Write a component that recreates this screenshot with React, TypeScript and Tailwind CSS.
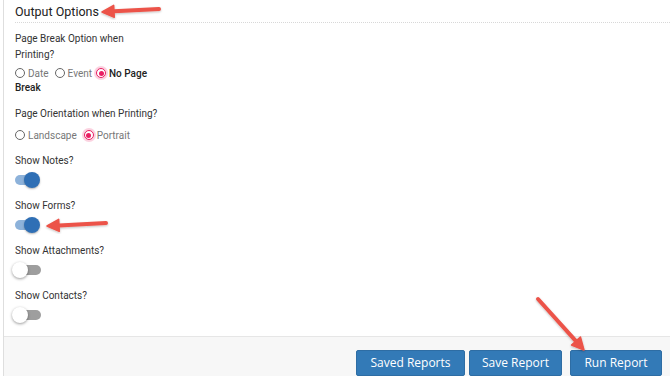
import React from 'react'

function Circle({ checked }: { checked?: boolean }) {
  return (
    <span
      className={
        checked
          ? 'inline-block align-[-1px] w-[10px] h-[10px] rounded-full border-[1px] border-[#e91e63] bg-white shadow-[0_0_0_2px_rgba(233,30,99,0.2)] relative mr-[3px]'
          : 'inline-block align-[-1px] w-[10px] h-[10px] rounded-full border-[1px] border-[#666] bg-white mr-[3px]'
      }
    >
      {checked && <span className="absolute left-[1.5px] top-[1.5px] w-[5px] h-[5px] rounded-full bg-[#e91e63]" />}
    </span>
  )
}

function Radio({ label, checked, gap = 0 }: { label: string; checked?: boolean; gap?: number }) {
  return (
    <>
      <Circle checked={checked} />
      <span className="text-[#777]" style={{ marginRight: gap }}>
        {label}
      </span>
    </>
  )
}

function Toggle({ on }: { on?: boolean }) {
  return (
    <div className="relative h-[20px] w-[30px] mt-[1px]">
      <div
        className={
          on
            ? 'absolute left-[0px] top-[5px] w-[24px] h-[10px] rounded-full bg-[#8db2da]'
            : 'absolute left-[2px] top-[5px] w-[24px] h-[10px] rounded-full bg-[#9e9e9e]'
        }
      />
      <div
        className={
          on
            ? 'absolute left-[9px] top-[2px] w-[16px] h-[16px] rounded-full bg-[#2f6fb5] shadow-[0_1px_2px_rgba(0,0,0,0.3)]'
            : 'absolute left-[-3px] top-[2px] w-[16px] h-[16px] rounded-full bg-white shadow-[0_1px_3px_rgba(0,0,0,0.4)]'
        }
      />
    </div>
  )
}

function ToggleField({ label, on }: { label: string; on?: boolean }) {
  return (
    <div className="h-[45px] pt-[1px]">
      <div className="leading-[16px]">{label}</div>
      <Toggle on={on} />
    </div>
  )
}

function Arrow({ x1, y1, x2, y2 }: { x1: number; y1: number; x2: number; y2: number }) {
  const ang = Math.atan2(y2 - y1, x2 - x1)
  const len = 12
  const w = 6
  const bx = x2 - Math.cos(ang) * len
  const by = y2 - Math.sin(ang) * len
  const px = -Math.sin(ang) * w
  const py = Math.cos(ang) * w
  return (
    <g filter="url(#sh)">
      <line x1={x1} y1={y1} x2={bx} y2={by} stroke="#ec5348" strokeWidth={4} strokeLinecap="round" />
      <polygon points={`${x2},${y2} ${bx + px},${by + py} ${bx - px},${by - py}`} fill="#ec5348" strokeLinejoin="round" stroke="#ec5348" strokeWidth={1.5} />
    </g>
  )
}

export default function App() {
  return (
    <div className="relative w-[670px] h-[376px] overflow-hidden bg-white font-['Roboto',sans-serif] text-[10px] text-[#333]">
      <div className="ml-[3px] h-full border-l border-[#dedede] flex flex-col">
        <div className="flex-1 pl-[11px]">
          <div className="pt-[3px] pb-[1px] border-b border-dotted border-[#d8d8d8] text-[12.5px] leading-[18px] text-[#222]">
            Output Options
          </div>
          <div className="w-[150px] mt-[8px] leading-[16px]">Page Break Option when Printing?</div>
          <div className="w-[150px] mt-[4px] leading-[14px]">
            <Radio label="Date" gap={6} />
            <Radio label="Event" gap={4} />
            <Circle checked />
            <span className="text-[#222] font-medium">No Page</span>
            <br />
            <span className="text-[#222] font-medium">Break</span>
          </div>
          <div className="mt-[11px] leading-[16px]">Page Orientation when Printing?</div>
          <div className="mt-[7px] leading-[14px]">
            <Radio label="Landscape" gap={7} />
            <Radio label="Portrait" checked />
          </div>
          <div className="mt-[9px]">
            <ToggleField label="Show Notes?" on />
            <ToggleField label="Show Forms?" on />
            <ToggleField label="Show Attachments?" />
            <ToggleField label="Show Contacts?" />
          </div>
        </div>
        <div className="h-[40px] border-t border-[#e6e6e6] bg-[#f7f7f7] flex justify-end items-start pt-[13px] pr-[8px] font-['Open_Sans',sans-serif] text-[12px] text-white">
          <button className="w-[109px] h-[26px] rounded-[2px] bg-[#337ab7] border border-[#2e6da4]">Saved Reports</button>
          <button className="ml-[4px] w-[93px] h-[26px] rounded-[2px] bg-[#337ab7] border border-[#2e6da4]">Save Report</button>
          <button className="ml-[8px] w-[92px] h-[26px] rounded-[2px] bg-[#337ab7] border border-[#2e6da4]">Run Report</button>
        </div>
      </div>
      <svg className="absolute inset-0 pointer-events-none" width={670} height={376}>
        <defs>
          <filter id="sh" x="-20%" y="-20%" width="140%" height="140%">
            <feDropShadow dx="0" dy="1" stdDeviation="1" floodColor="#000" floodOpacity="0.25" />
          </filter>
        </defs>
        <Arrow x1={159} y1={9} x2={102} y2={12} />
        <Arrow x1={106} y1={223} x2={47} y2={226} />
        <Arrow x1={538} y1={299} x2={584} y2={350} />
      </svg>
    </div>
  )
}
